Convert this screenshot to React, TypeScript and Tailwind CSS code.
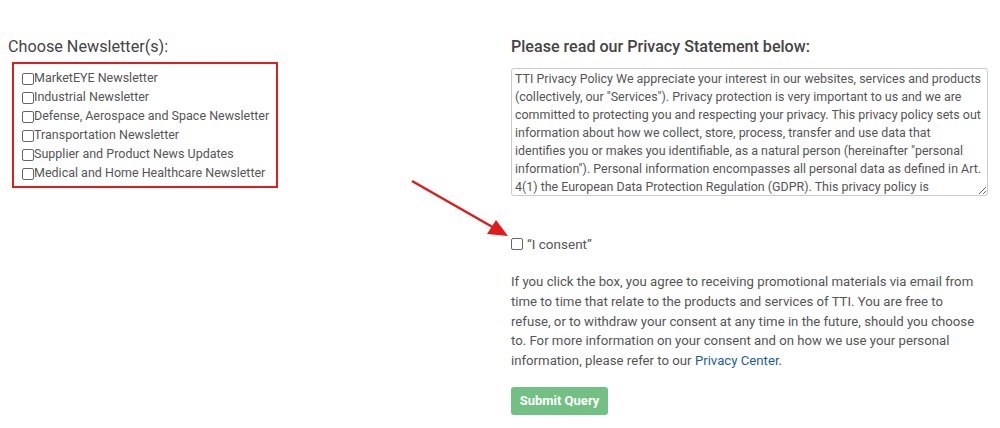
const newsletters = [
  'MarketEYE Newsletter',
  'Industrial Newsletter',
  'Defense, Aerospace and Space Newsletter',
  'Transportation Newsletter',
  'Supplier and Product News Updates',
  'Medical and Home Healthcare Newsletter',
];

const policy = [
  'TTI Privacy Policy We appreciate your interest in our websites, services and products',
  '(collectively, our "Services"). Privacy protection is very important to us and we are',
  'committed to protecting you and respecting your privacy. This privacy policy sets out',
  'information about how we collect, store, process, transfer and use data that',
  'identifies you or makes you identifiable, as a natural person (hereinafter "personal',
  'information"). Personal information encompasses all personal data as defined in Art.',
  '4(1) the European Data Protection Regulation (GDPR). This privacy policy is',
  'intended to inform you about the personal information we collect.',
].join('\n');

function Box() {
  return <span className="inline-block w-[12px] h-[12px] border border-[#666] rounded-[2px] bg-white shrink-0" />;
}

export default function App() {
  return (
    <div className="relative w-[1000px] h-[428px] bg-white text-[#555] font-['Roboto',sans-serif]">
      <div className="flex pt-[36px]">
        <div className="w-[503px] pl-[8px]">
          <h2 className="text-[16.2px] leading-[22px] text-[#444]">Choose Newsletter(s):</h2>
          <div className="mt-[4px] ml-[4px] w-[266px] border-2 border-[#dc1f1f] pl-[8px] pt-[5px] pb-[3px]">
            {newsletters.map((n) => (
              <label key={n} className="flex items-center h-[19px] text-[12.5px] text-[#555] whitespace-nowrap">
                <Box />
                <span>{n}</span>
              </label>
            ))}
          </div>
        </div>
        <div className="w-[478px] pl-[8px]">
          <h2 className="text-[16.1px] leading-[22px] font-medium text-[#444]">Please read our Privacy Statement below:</h2>
          <textarea
            readOnly
            value={policy}
            className="mt-[10px] block w-[477px] h-[128px] border border-[#ccc] rounded-[3px] pl-[3px] pr-0 py-[1px] text-[12.45px] leading-[18px] text-[#555] overflow-hidden resize-y font-['Roboto',sans-serif]"
          />
          <label className="mt-[41px] flex items-center gap-[4px] text-[13.5px] text-[#555] h-[14px]">
            <Box />
            <span>“I consent”</span>
          </label>
          <p className="mt-[21px] text-[13.2px] leading-[19.8px] text-[#555]">
            If you click the box, you agree to receiving promotional materials via email from time to time that relate to the products and services of TTI. You are free to refuse, or to withdraw your consent at any time in the future, should you choose to. For more information on your consent and on how we use your personal information, please refer to our{' '}
            <a className="text-[#1a5e96]">Privacy Center</a>.
          </p>
          <button className="mt-[16px] w-[97px] h-[28px] rounded-[3px] bg-[#72c083] text-white text-[13px] font-bold">
            Submit Query
          </button>
        </div>
      </div>
      <svg className="absolute left-[408px] top-[176px]" width="104" height="66" viewBox="0 0 104 66">
        <line x1="4" y1="5" x2="88" y2="53" stroke="#e01b1b" strokeWidth="2.5" />
        <polygon points="100,60 79,58 88,44" fill="#e01b1b" />
      </svg>
    </div>
  );
}
